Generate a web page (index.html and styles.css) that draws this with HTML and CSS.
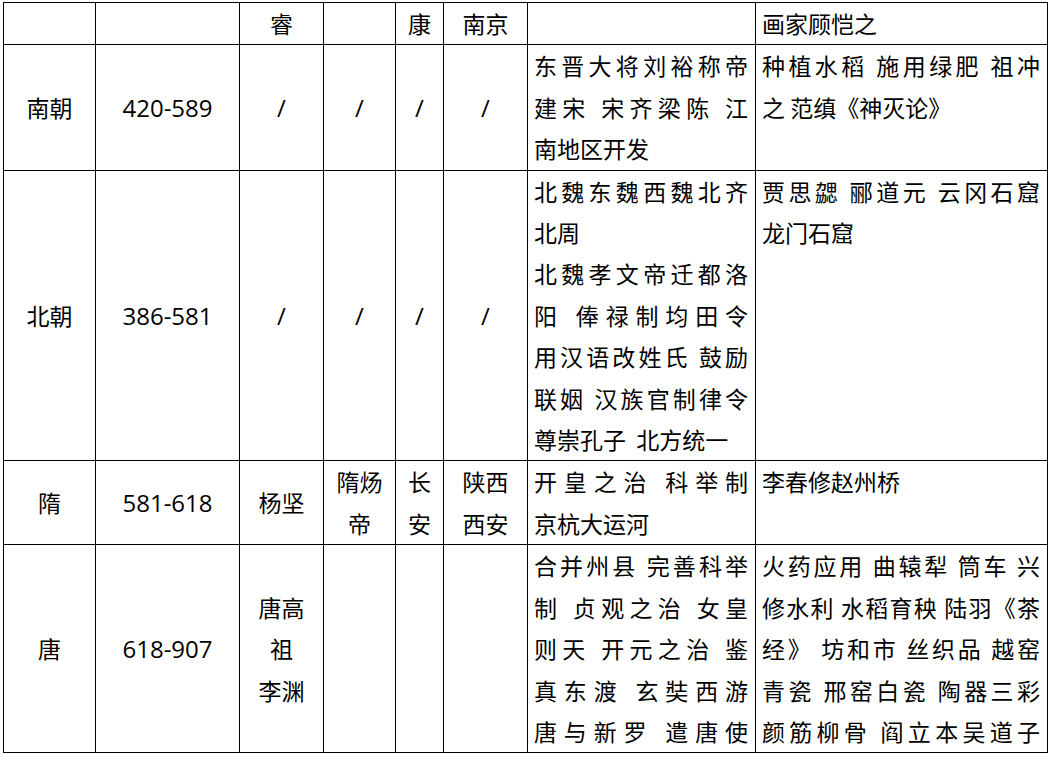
FILE: index.html
```html
<!DOCTYPE html>
<html lang="zh-CN">
<head>
<meta charset="utf-8">
<title>南北朝隋唐</title>
<link rel="stylesheet" href="styles.css">
</head>
<body>
<table class="grid">
  <colgroup>
    <col class="c1"><col class="c2"><col class="c3"><col class="c4"><col class="c5"><col class="c6"><col class="c7"><col class="c8">
  </colgroup>
  <tr class="head">
    <td></td><td></td><td>睿</td><td></td><td>康</td><td>南京</td><td></td><td class="txt"><div class="ln">画家顾恺之</div></td>
  </tr>
  <tr>
    <td>南朝</td><td class="num">420-589</td><td class="num">/</td><td class="num">/</td><td class="num">/</td><td class="num">/</td>
    <td class="txt">
      <div class="ln j">东晋大将刘裕称帝</div>
      <div class="ln j">建宋 宋齐梁陈 江</div>
      <div class="ln">南地区开发</div>
    </td>
    <td class="txt">
      <div class="ln j">种植水稻 施用绿肥 祖冲</div>
      <div class="ln">之 范缜《神灭论》</div>
    </td>
  </tr>
  <tr>
    <td>北朝</td><td class="num">386-581</td><td class="num">/</td><td class="num">/</td><td class="num">/</td><td class="num">/</td>
    <td class="txt">
      <div class="ln j">北魏东魏西魏北齐</div>
      <div class="ln">北周</div>
      <div class="ln j">北魏孝文帝迁都洛</div>
      <div class="ln j">阳 俸禄制均田令</div>
      <div class="ln j">用汉语改姓氏 鼓励</div>
      <div class="ln j">联姻 汉族官制律令</div>
      <div class="ln">尊崇孔子&nbsp; 北方统一</div>
    </td>
    <td class="txt">
      <div class="ln j">贾思勰 郦道元 云冈石窟</div>
      <div class="ln">龙门石窟</div>
    </td>
  </tr>
  <tr>
    <td>隋</td><td class="num">581-618</td><td>杨坚</td><td>隋炀<br>帝</td><td>长<br>安</td><td>陕西<br>西安</td>
    <td class="txt">
      <div class="ln j">开皇之治 科举制</div>
      <div class="ln">京杭大运河</div>
    </td>
    <td class="txt">
      <div class="ln">李春修赵州桥</div>
    </td>
  </tr>
  <tr>
    <td>唐</td><td class="num">618-907</td><td>唐高<br>祖<br>李渊</td><td></td><td></td><td></td>
    <td class="txt">
      <div class="ln j">合并州县 完善科举</div>
      <div class="ln j">制 贞观之治 女皇</div>
      <div class="ln j">则天 开元之治 鉴</div>
      <div class="ln j">真东渡 玄奘西游</div>
      <div class="ln j">唐与新罗 遣唐使</div>
    </td>
    <td class="txt">
      <div class="ln j">火药应用 曲辕犁 筒车 兴</div>
      <div class="ln j">修水利 水稻育秧 陆羽《茶</div>
      <div class="ln j">经》 坊和市 丝织品 越窑</div>
      <div class="ln j">青瓷 邢窑白瓷 陶器三彩</div>
      <div class="ln j">颜筋柳骨 阎立本吴道子</div>
    </td>
  </tr>
</table>
</body>
</html>
```

FILE: styles.css
```css
html, body {
  margin: 0;
  padding: 0;
  background: #ffffff;
}

body {
  padding: 2px 0 0 3px;
}

.grid {
  border-collapse: collapse;
  table-layout: fixed;
  width: 1044px;
  color: #000;
  font-family: "Noto Sans CJK SC", sans-serif;
  font-size: 23px;
  line-height: 41.4px;
}

.c1 { width: 92px; }
.c2 { width: 144px; }
.c3 { width: 84px; }
.c4 { width: 72px; }
.c5 { width: 48px; }
.c6 { width: 84px; }
.c7 { width: 228px; }
.c8 { width: 292px; }

.grid td {
  border: 1px solid #000;
  padding: 0 2px;
  text-align: center;
  vertical-align: middle;
}

.grid td.num {
  font-family: "Open Sans", "Noto Sans CJK SC", sans-serif;
  font-size: 24px;
}

.grid td.txt {
  text-align: left;
  vertical-align: top;
  padding: 0 7px 0 6px;
}

.ln {
  white-space: nowrap;
}

.ln.j {
  text-align: justify;
  text-align-last: justify;
}
```
